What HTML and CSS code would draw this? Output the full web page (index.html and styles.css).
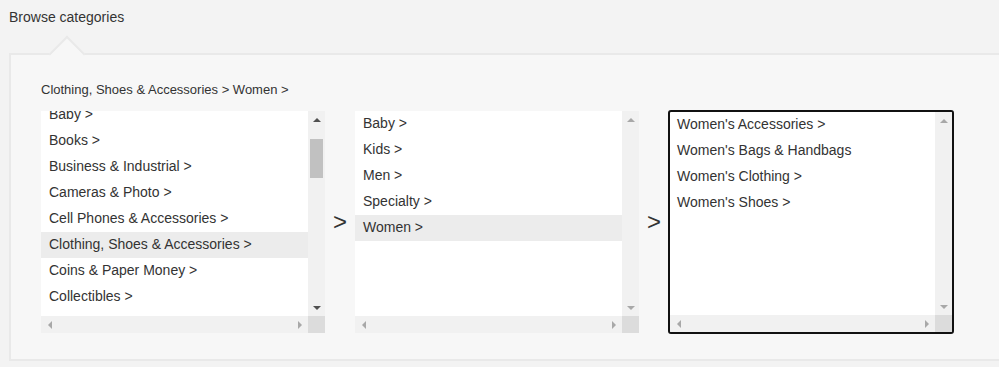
FILE: index.html
```html
<!DOCTYPE html>
<html lang="en">
<head>
    <meta charset="UTF-8">
    <title>Browse categories</title>
    <link rel="stylesheet" href="styles.css">
</head>
<body>
    <h2 class="browse-title">Browse categories</h2>
    <div class="browse-panel">
        <div class="breadcrumb">Clothing, Shoes &amp; Accessories &gt; Women &gt;</div>
        <div class="columns">
            <div class="listbox">
                <div class="lb-items">
                    <ul class="scrolled">
                        <li>Baby &gt;</li>
                        <li>Books &gt;</li>
                        <li>Business &amp; Industrial &gt;</li>
                        <li>Cameras &amp; Photo &gt;</li>
                        <li>Cell Phones &amp; Accessories &gt;</li>
                        <li class="selected">Clothing, Shoes &amp; Accessories &gt;</li>
                        <li>Coins &amp; Paper Money &gt;</li>
                        <li>Collectibles &gt;</li>
                    </ul>
                </div>
                <div class="vscroll">
                    <span class="btn"><i class="arr up"></i></span>
                    <span class="thumb"></span>
                    <span class="spacer"></span>
                    <span class="btn"><i class="arr down"></i></span>
                </div>
                <div class="hscroll">
                    <span class="btn"><i class="arr left off"></i></span>
                    <span class="btn"><i class="arr right off"></i></span>
                </div>
                <div class="corner"></div>
            </div>

            <div class="sep">&gt;</div>

            <div class="listbox">
                <div class="lb-items">
                    <ul>
                        <li>Baby &gt;</li>
                        <li>Kids &gt;</li>
                        <li>Men &gt;</li>
                        <li>Specialty &gt;</li>
                        <li class="selected">Women &gt;</li>
                    </ul>
                </div>
                <div class="vscroll">
                    <span class="btn"><i class="arr up off"></i></span>
                    <span class="spacer"></span>
                    <span class="btn"><i class="arr down off"></i></span>
                </div>
                <div class="hscroll">
                    <span class="btn"><i class="arr left off"></i></span>
                    <span class="btn"><i class="arr right off"></i></span>
                </div>
                <div class="corner"></div>
            </div>

            <div class="sep">&gt;</div>

            <div class="listbox focused">
                <div class="lb-items">
                    <ul>
                        <li>Women's Accessories &gt;</li>
                        <li>Women's Bags &amp; Handbags</li>
                        <li>Women's Clothing &gt;</li>
                        <li>Women's Shoes &gt;</li>
                    </ul>
                </div>
                <div class="vscroll">
                    <span class="btn"><i class="arr up off"></i></span>
                    <span class="spacer"></span>
                    <span class="btn"><i class="arr down off"></i></span>
                </div>
                <div class="hscroll">
                    <span class="btn"><i class="arr left off"></i></span>
                    <span class="btn"><i class="arr right off"></i></span>
                </div>
                <div class="corner"></div>
            </div>
        </div>
    </div>
</body>
</html>
```

FILE: styles.css
```css
body {
    font-family: "Liberation Sans", Arial, sans-serif;
    margin: 0;
    padding: 9px 0 0 9px;
    background-color: #f3f3f3;
    color: #333;
    overflow: hidden;
}
.browse-title {
    font-size: 14px;
    font-weight: normal;
    line-height: 16px;
    margin: 0 0 28px 0;
}
.browse-panel {
    position: relative;
    background: #f7f7f7;
    border: 2px solid #e9e9e9;
    margin-right: -20px;
    padding: 27px 30px 25px 30px;
}
.browse-panel::before {
    content: "";
    position: absolute;
    top: -14px;
    left: 43px;
    width: 24px;
    height: 24px;
    background: #f7f7f7;
    border-top: 2px solid #e9e9e9;
    border-left: 2px solid #e9e9e9;
    transform: rotate(45deg);
}
.breadcrumb {
    font-size: 13px;
    line-height: 15px;
    margin-bottom: 13px;
}
.columns {
    display: flex;
    align-items: center;
}
.sep {
    width: 30px;
    text-align: center;
    font-size: 24px;
    line-height: 24px;
    color: #333;
}
.listbox {
    width: 284px;
    height: 222px;
    box-sizing: border-box;
    background: #fff;
    display: grid;
    grid-template-columns: 1fr 17px;
    grid-template-rows: 1fr 17px;
    overflow: hidden;
}
.listbox.focused {
    width: 286px;
    height: 224px;
    margin: 0 -1px;
    border: 2px solid #111;
    border-radius: 3px;
}
.lb-items {
    overflow: hidden;
}
.lb-items ul {
    list-style: none;
    margin: 0;
    padding: 0;
}
.lb-items ul.scrolled {
    margin-top: -9px;
}
.lb-items li {
    height: 26px;
    line-height: 24px;
    padding-left: 8px;
    font-size: 14px;
    white-space: nowrap;
}
.focused .lb-items li {
    padding-left: 7px;
}
.lb-items li.selected {
    background: #ececec;
}
.vscroll {
    background: #f1f1f1;
    display: flex;
    flex-direction: column;
    align-items: center;
}
.hscroll {
    background: #f1f1f1;
    display: flex;
    justify-content: space-between;
}
.corner {
    background: #dcdcdc;
}
.btn {
    width: 17px;
    height: 17px;
    display: flex;
    align-items: center;
    justify-content: center;
    flex: none;
}
.spacer {
    flex: 1;
}
.thumb {
    width: 13px;
    height: 39px;
    margin-top: 11px;
    background: #c1c1c1;
}
.arr {
    width: 0;
    height: 0;
    display: block;
}
.arr.up {
    border-left: 4px solid transparent;
    border-right: 4px solid transparent;
    border-bottom: 4px solid #505050;
}
.arr.down {
    border-left: 4px solid transparent;
    border-right: 4px solid transparent;
    border-top: 4px solid #505050;
}
.arr.left {
    border-top: 4px solid transparent;
    border-bottom: 4px solid transparent;
    border-right: 4px solid #505050;
}
.arr.right {
    border-top: 4px solid transparent;
    border-bottom: 4px solid transparent;
    border-left: 4px solid #505050;
}
.arr.up.off { border-bottom-color: #a8a8a8; }
.arr.down.off { border-top-color: #a8a8a8; }
.arr.left.off { border-right-color: #a8a8a8; }
.arr.right.off { border-left-color: #a8a8a8; }
```
